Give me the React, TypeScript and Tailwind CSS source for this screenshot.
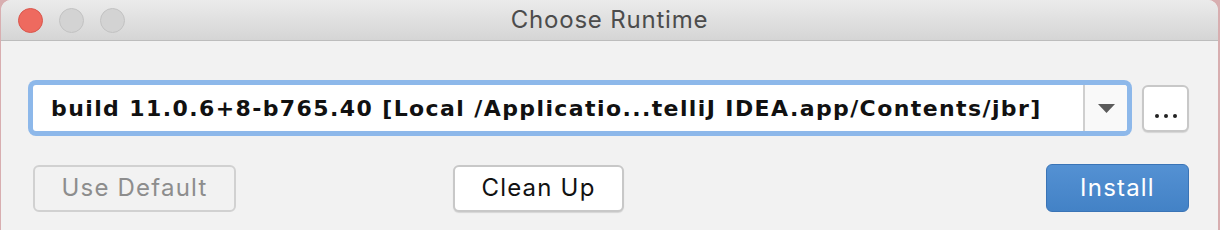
export default function App() {
  return (
    <div className="w-[1220px] h-[230px] bg-[#d8aeb0] overflow-hidden">
      <div className="ml-[1px] w-[1217px] h-[230px] flex flex-col rounded-t-[10px] overflow-hidden bg-[#f2f2f2] font-['Inter',sans-serif]">
        {/* Title bar */}
        <div className="relative h-[41px] shrink-0 flex items-center justify-center bg-gradient-to-b from-[#ebebeb] to-[#d5d5d5] border-b border-[#bdbdbd]">
          <div className="absolute left-[17px] top-[8px] flex gap-[16px]">
            <span className="w-[25px] h-[25px] rounded-full bg-[#ee6a5f] border border-[#d9574d]" />
            <span className="w-[25px] h-[25px] rounded-full bg-[#d3d3d3] border border-[#c2c2c2]" />
            <span className="w-[25px] h-[25px] rounded-full bg-[#d3d3d3] border border-[#c2c2c2]" />
          </div>
          <span className="text-[24px] text-[#4c4c4c] tracking-[0.8px]">Choose Runtime</span>
        </div>

        {/* Content */}
        <div className="flex flex-col pl-[27px] pr-[29px] pt-[39px]">
          <div className="flex items-center">
            <div className="flex-1 h-[56px] p-[5px] rounded-[8px] bg-[#8db8ea]">
              <div className="h-full flex bg-white rounded-[3px]">
                <div className="flex-1 flex items-center pl-[18px] font-['DejaVu_Sans',sans-serif] font-bold text-[22px] tracking-[1.4px] text-[#111] whitespace-nowrap overflow-hidden">
                  build 11.0.6+8-b765.40 [Local /Applicatio...telliJ IDEA.app/Contents/jbr]
                </div>
                <div className="w-[44px] flex items-center justify-center border-l-2 border-[#cfcfcf] bg-[#f9f9f9] rounded-r-[3px]">
                  <svg width="17" height="9" viewBox="0 0 17 9">
                    <path d="M0 0 H17 L8.5 9 Z" fill="#5b5b5b" />
                  </svg>
                </div>
              </div>
            </div>
            <button className="ml-[10px] w-[47px] h-[47px] flex items-end justify-center pb-[12px] bg-white border-2 border-[#c8c8c8] rounded-[6px] shadow-[0_1px_1px_rgba(0,0,0,0.12)]">
              <span className="flex gap-[5px]">
                <span className="w-[4px] h-[4px] rounded-full bg-[#222]" />
                <span className="w-[4px] h-[4px] rounded-full bg-[#222]" />
                <span className="w-[4px] h-[4px] rounded-full bg-[#222]" />
              </span>
            </button>
          </div>

          <div className="flex items-center mt-[28px] pl-[5px] text-[24px] tracking-[1.2px]">
            <button className="w-[203px] h-[47px] flex items-center justify-center border-2 border-[#d1d1d1] rounded-[6px] bg-[#f2f2f2] text-[#8d8d8d]">
              Use Default
            </button>
            <button className="ml-[217px] w-[171px] h-[47px] flex items-center justify-center border-2 border-[#c8c8c8] rounded-[6px] bg-white text-[#111] shadow-[0_1px_1px_rgba(0,0,0,0.12)]">
              Clean Up
            </button>
            <button className="ml-auto w-[143px] h-[48px] flex items-center justify-center border border-[#3a74b6] rounded-[6px] bg-gradient-to-b from-[#5491d3] to-[#4382c6] text-white">
              Install
            </button>
          </div>
        </div>
      </div>
    </div>
  );
}
